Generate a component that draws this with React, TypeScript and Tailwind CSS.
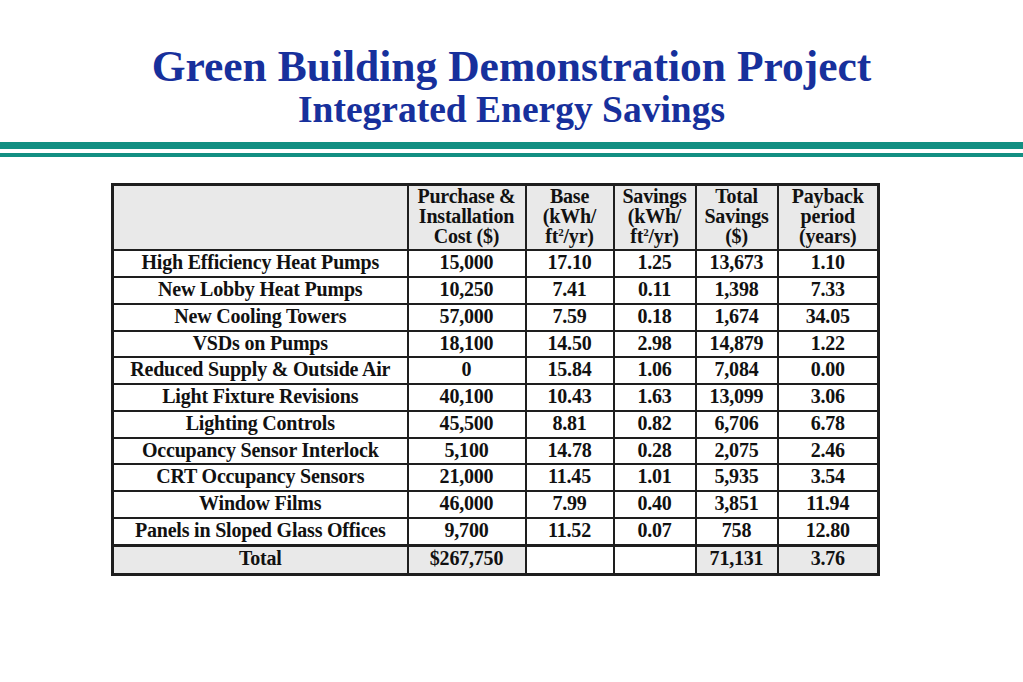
import type { ReactNode } from 'react'

type Row = {
  name: string
  cost: string
  base: string
  savings: string
  total: string
  payback: string
}

const rows: Row[] = [
  { name: 'High Efficiency Heat Pumps', cost: '15,000', base: '17.10', savings: '1.25', total: '13,673', payback: '1.10' },
  { name: 'New Lobby Heat Pumps', cost: '10,250', base: '7.41', savings: '0.11', total: '1,398', payback: '7.33' },
  { name: 'New Cooling Towers', cost: '57,000', base: '7.59', savings: '0.18', total: '1,674', payback: '34.05' },
  { name: 'VSDs on Pumps', cost: '18,100', base: '14.50', savings: '2.98', total: '14,879', payback: '1.22' },
  { name: 'Reduced Supply & Outside Air', cost: '0', base: '15.84', savings: '1.06', total: '7,084', payback: '0.00' },
  { name: 'Light Fixture Revisions', cost: '40,100', base: '10.43', savings: '1.63', total: '13,099', payback: '3.06' },
  { name: 'Lighting Controls', cost: '45,500', base: '8.81', savings: '0.82', total: '6,706', payback: '6.78' },
  { name: 'Occupancy Sensor Interlock', cost: '5,100', base: '14.78', savings: '0.28', total: '2,075', payback: '2.46' },
  { name: 'CRT Occupancy Sensors', cost: '21,000', base: '11.45', savings: '1.01', total: '5,935', payback: '3.54' },
  { name: 'Window Films', cost: '46,000', base: '7.99', savings: '0.40', total: '3,851', payback: '11.94' },
  { name: 'Panels in Sloped Glass Offices', cost: '9,700', base: '11.52', savings: '0.07', total: '758', payback: '12.80' },
]

const cell = 'border-2 border-[#1e1e1e] px-0 pb-[3px] pt-0 text-center align-middle leading-[20px] whitespace-nowrap'

function Ft2(): ReactNode {
  return (
    <>
      ft<span className="relative -top-[7px] text-[11px] leading-none">2</span>/yr)
    </>
  )
}

export default function App() {
  return (
    <div className="h-[682px] w-[1023px] overflow-hidden bg-white">
      <header className="flex flex-col items-center pt-[42px] font-['Liberation_Serif',serif] font-bold text-[#17309c]">
        <h1 className="text-[43.5px] leading-[48px]">Green Building Demonstration Project</h1>
        <h2 className="text-[37.5px] leading-[40px]">Integrated Energy Savings</h2>
      </header>

      <div className="mt-[12px] flex flex-col gap-[4px]">
        <div className="h-[7px] bg-[#128f82]" />
        <div className="h-[4px] bg-[#128f82]" />
      </div>

      <div className="mt-[26px] flex pl-[111px]">
        <table className="table-fixed border-collapse border-[3px] border-[#1e1e1e] font-['Liberation_Serif',serif] text-[20px] font-bold tracking-[-0.2px] text-[#111]">
          <colgroup>
            <col className="w-[295px]" />
            <col className="w-[118px]" />
            <col className="w-[88px]" />
            <col className="w-[82px]" />
            <col className="w-[82px]" />
            <col className="w-[101px]" />
          </colgroup>
          <thead>
            <tr className="h-[64px] bg-[#e9e9e9]">
              <th className={cell} />
              <th className={cell}>
                Purchase &amp;
                <br />
                Installation
                <br />
                Cost ($)
              </th>
              <th className={cell}>
                Base
                <br />
                (kWh/
                <br />
                <Ft2 />
              </th>
              <th className={cell}>
                Savings
                <br />
                (kWh/
                <br />
                <Ft2 />
              </th>
              <th className={cell}>
                Total
                <br />
                Savings
                <br />
                ($)
              </th>
              <th className={cell}>
                Payback
                <br />
                period
                <br />
                (years)
              </th>
            </tr>
          </thead>
          <tbody>
            {rows.map((r, i) => (
              <tr key={r.name} className={i % 4 === 3 ? 'h-[26px]' : 'h-[27px]'}>
                <td className={cell}>{r.name}</td>
                <td className={cell}>{r.cost}</td>
                <td className={cell}>{r.base}</td>
                <td className={cell}>{r.savings}</td>
                <td className={cell}>{r.total}</td>
                <td className={cell}>{r.payback}</td>
              </tr>
            ))}
            <tr className="h-[29px]">
              <td className={`${cell} border-t-[3px] bg-[#e9e9e9]`}>Total</td>
              <td className={`${cell} border-t-[3px] bg-[#e9e9e9]`}>$267,750</td>
              <td className={`${cell} border-t-[3px]`} />
              <td className={`${cell} border-t-[3px]`} />
              <td className={`${cell} border-t-[3px] bg-[#e9e9e9]`}>71,131</td>
              <td className={`${cell} border-t-[3px] bg-[#e9e9e9]`}>3.76</td>
            </tr>
          </tbody>
        </table>
      </div>
    </div>
  )
}
